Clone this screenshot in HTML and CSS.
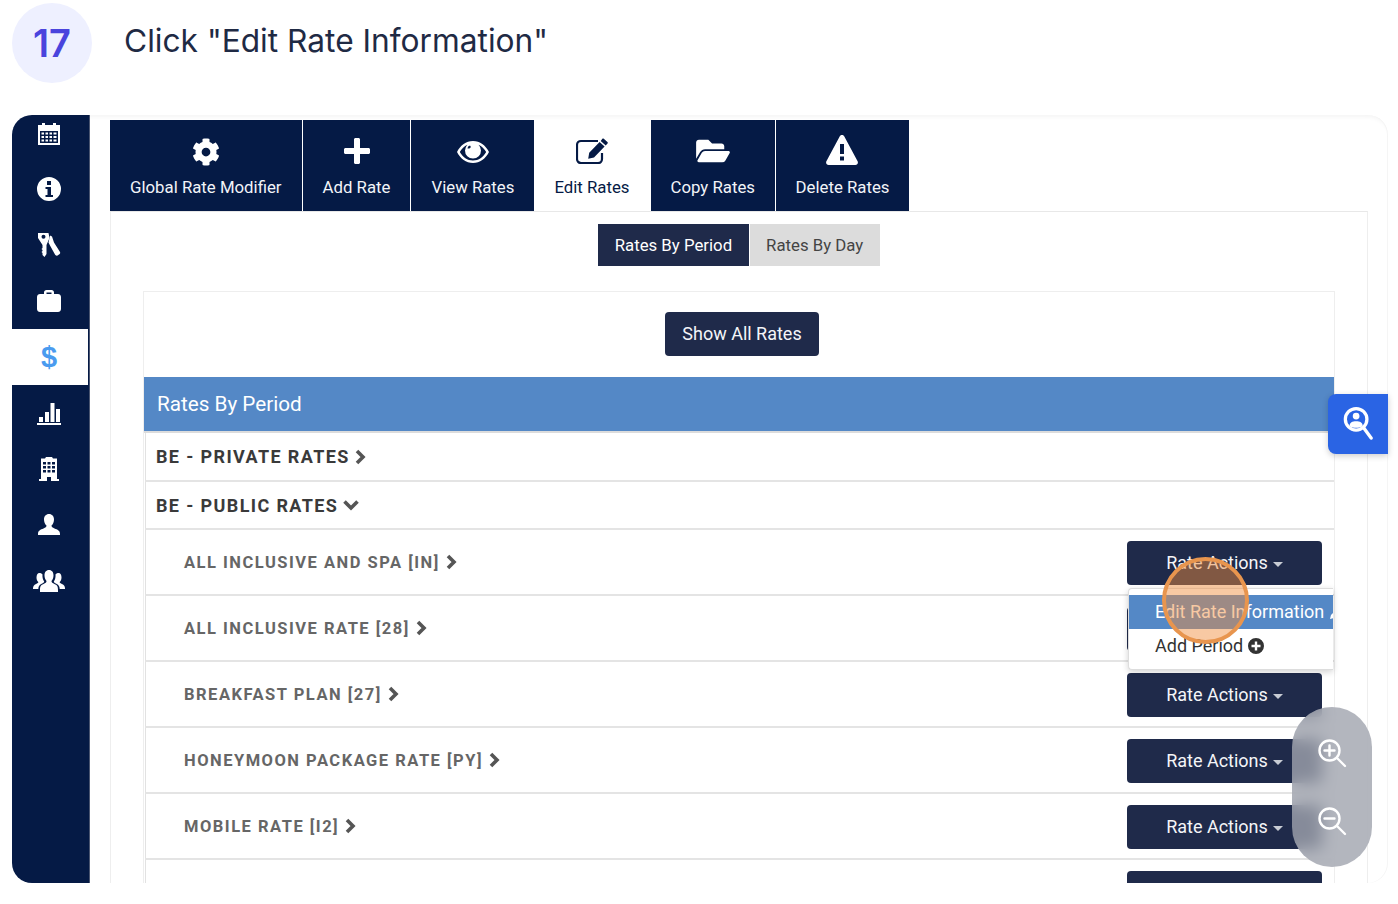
FILE: index.html
```html
<!DOCTYPE html>
<html lang="en">
<head>
<meta charset="utf-8">
<title>Click "Edit Rate Information"</title>
<link rel="stylesheet" href="styles.css">
</head>
<body>
<header class="step">
  <div class="step-num">17</div>
  <h1 class="step-title">Click "Edit Rate Information"</h1>
</header>
<main class="frame">
  <nav class="side">
    <a class="side-item"><svg class="si" viewBox="0 0 24 24"><path fill-rule="evenodd" d="M1 3h4V1h3v2h8V1h3v2h4v20H1zM3 9v12h18V9zM4.500 10.500h2.500v2h-2.500zm4 0h2.500v2H8.500zm4 0h2.500v2h-2.500zm4 0h3v2h-3zm-12 3.500h2.500v2h-2.500zm4 0h2.500v2H8.500zm4 0h2.500v2h-2.500zm4 0h3v2h-3zm-12 3.500h2.500v2h-2.500zm4 0h2.500v2H8.500zm4 0h2.500v2h-2.500zm4 0h3v2h-3z"/></svg></a>
    <a class="side-item"><svg class="si" viewBox="0 0 24 24"><path fill-rule="evenodd" d="M12 0a12 12 0 1 0 0 24 12 12 0 0 0 0-24zM10 4h4v4h-4zM8.500 10H14v8h2v2H8.500v-2h2v-6h-2z"/></svg></a>
    <a class="side-item"><svg class="si" viewBox="0 0 24 24"><path fill-rule="evenodd" d="M1 0h10.500l1 5-3 7v9l-2 3-2-2v-2l-1-1 1-1v-1l-1-1 1-1v-3L1 5zM4.500 3.700a2 2 0 1 0 4 0 2 2 0 0 0-4 0z"/><path d="M13 2.500l2 1 2 6 6 9.500c.5 1 0 2-1 2.500l-1.500 1c-1 .5-2 0-2.500-1l-5-9-1.500-3z"/></svg></a>
    <a class="side-item"><svg class="si" viewBox="0 0 24 24"><path fill-rule="evenodd" d="M3 5h4V3.500C7 2 8 1 9.500 1h5C16 1 17 2 17 3.500V5h4c1.500 0 3 1.300 3 3v12c0 1.700-1.500 3-3 3H3c-1.500 0-3-1.300-3-3V8c0-1.700 1.500-3 3-3zm6.500 0h5V3.500h-5z"/></svg></a>
    <a class="side-item side-active"><span class="dollar">$</span></a>
    <a class="side-item"><svg class="si" viewBox="0 0 24 24"><path d="M0 22h24v2H0zM2 16h4v5H2zM8 11h4v10H8zM13.500 2h4v19h-4zM19 8h4v13h-4z"/></svg></a>
    <a class="side-item"><svg class="si" viewBox="0 0 24 24"><path fill-rule="evenodd" d="M9 0h6l1 1.500h4V22h2v2h-8v-4h-4v4H2v-2h2V1.500h4zM6 5v2.500h3V5zm4.500 0v2.500h3V5zM15 5v2.500h3V5zM6 9v2.500h3V9zm4.500 0v2.500h3V9zM15 9v2.500h3V9zM6 13v2.500h3V13zm4.500 0v2.500h3V13zM15 13v2.500h3V13z"/></svg></a>
    <a class="side-item"><svg class="si" viewBox="0 0 24 24"><path d="M12 1c3 0 5 2.300 5 5.500 0 2.600-1 4.800-2.500 6 0 1.500 1 2 3 3 3 1.200 5.500 2 5.500 5.500v1H1v-1c0-3.500 2.500-4.300 5.500-5.500 2-1 3-1.500 3-3C8 11.300 7 9.100 7 6.500 7 3.300 9 1 12 1z"/></svg></a>
    <a class="side-item"><svg class="si si-wide" viewBox="0 0 32 24"><path d="M16 1c3 0 4.500 2.300 4.500 5.500 0 2.500-1 4.300-2 5.500 0 1.500 1 2 3 3 2.500 1 3.500 2 3.500 6v2H7v-2c0-4 1-5 3.500-6 2-1 3-1.500 3-3-1-1.200-2-3-2-5.500C11.500 3.300 13 1 16 1zM6.500 4c1.200 0 2.300.5 3 1.500-.3 2.500.3 5 1.700 7-.2 1-1 1.500-2.500 2.200C6 16 5.500 17.500 5.300 20H0v-.5c0-2.500 1-3.500 3-4.500 1.500-.7 2.300-1 2.300-2-1-1-1.800-2.500-1.800-4.500C3.500 6 4.500 4 6.500 4zM25.500 4c2 0 3 2 3 4.500 0 2-.8 3.500-1.800 4.500 0 1 .8 1.300 2.300 2 2 1 3 2 3 4.500v.5h-5.300c-.2-2.500-.7-4-3.400-5.300-1.500-.7-2.300-1.200-2.500-2.200 1.400-2 2-4.500 1.700-7 .7-1 1.800-1.500 3-1.500z"/></svg></a>
  </nav>
  <section class="content">
    <div class="tabs">
      <a class="tab"><svg class="ti" viewBox="0 0 512 512"><path d="M487.400 315.700l-42.600-24.600c4.300-23.200 4.300-47 0-70.200l42.600-24.600c4.900-2.800 7.100-8.600 5.500-14-11.100-35.600-30-67.800-54.700-94.600-3.800-4.100-10-5.100-14.800-2.300L380.800 110c-17.900-15.400-38.500-27.300-60.800-35.100V25.800c0-5.600-3.900-10.500-9.400-11.700-36.700-8.200-74.300-7.800-109.200 0-5.500 1.200-9.400 6.100-9.400 11.700V75c-22.200 7.900-42.800 19.800-60.800 35.100L88.700 85.500c-4.900-2.800-11-1.900-14.800 2.300-24.700 26.700-43.600 58.900-54.700 94.600-1.700 5.400.6 11.200 5.500 14L67.300 221c-4.300 23.200-4.300 47 0 70.200l-42.600 24.600c-4.900 2.800-7.100 8.600-5.500 14 11.100 35.600 30 67.800 54.700 94.600 3.800 4.100 10 5.100 14.800 2.300l42.600-24.600c17.900 15.400 38.500 27.300 60.800 35.100v49.200c0 5.600 3.900 10.500 9.400 11.700 36.700 8.200 74.300 7.800 109.200 0 5.500-1.200 9.400-6.100 9.400-11.700v-49.200c22.200-7.900 42.800-19.800 60.800-35.100l42.600 24.600c4.900 2.800 11 1.900 14.800-2.300 24.700-26.700 43.600-58.900 54.700-94.600 1.500-5.500-.7-11.300-5.600-14.100zM256 336c-44.100 0-80-35.900-80-80s35.900-80 80-80 80 35.900 80 80-35.900 80-80 80z"/></svg><span>Global Rate Modifier</span></a>
      <a class="tab"><svg class="ti ti-plus" viewBox="0 0 26 26"><path d="M10 1.500C10 .7 10.700 0 11.500 0h3c.8 0 1.500.7 1.500 1.500V10h8.500c.8 0 1.500.7 1.500 1.500v3c0 .8-.7 1.500-1.500 1.500H16v8.500c0 .8-.7 1.500-1.500 1.500h-3c-.8 0-1.500-.7-1.500-1.500V16H1.500C.7 16 0 15.300 0 14.500v-3C0 10.700.7 10 1.500 10H10z"/></svg><span>Add Rate</span></a>
      <a class="tab"><svg class="ti ti-eye" viewBox="0 0 32 22"><path fill-rule="evenodd" d="M16 0c7 0 12.500 4.300 16 11-3.500 6.700-9 11-16 11S3.500 17.700 0 11C3.500 4.300 9 0 16 0zM2.800 11c3 5 7.500 8.500 13.200 8.500S26.200 16 29.200 11C27.300 7.800 24.800 5.300 21.500 3.800a8 8 0 1 1-11 0C7.200 5.300 4.700 7.800 2.800 11zM13 4.500a3 3 0 0 0-2.500 3h2.200c0-.8.500-1.200 1.300-1.300z"/></svg><span>View Rates</span></a>
      <a class="tab tab-active"><svg class="ti ti-edit" viewBox="0 0 32 26"><path fill="none" stroke="currentColor" stroke-width="2.200" d="M26 15v6c0 2.300-1.700 4-4 4H5c-2.300 0-4-1.700-4-4V7c0-2.300 1.700-4 4-4h17"/><path d="M27.500.6l3.900 3.400c.6.500.6 1.100.1 1.600l-1.800 1.900-5-4.500 1.700-2.200c.3-.4.700-.5 1.100-.2zM23.600 3.900l5 4.500-10.600 11.200-5.800 1.200 1-6z"/></svg><span>Edit Rates</span></a>
      <a class="tab"><svg class="ti ti-folder" viewBox="0 0 576 512"><path d="M572.694 292.093L500.270 416.248A63.997 63.997 0 0 1 444.989 448H45.025c-18.523 0-30.064-20.093-20.731-36.093l72.424-124.155A64 64 0 0 1 152 256h399.964c18.523 0 30.064 20.093 20.730 36.093zM152 224h328v-48c0-26.510-21.490-48-48-48H272l-64-64H48C21.490 64 0 85.490 0 112v278.046l69.077-118.418C86.214 242.250 117.989 224 152 224z"/></svg><span>Copy Rates</span></a>
      <a class="tab"><svg class="ti ti-warn" viewBox="0 0 32 30"><path fill-rule="evenodd" d="M13.800 1.300c1-1.700 3.400-1.700 4.400 0l13.400 25c.9 1.700-.3 3.700-2.200 3.700H2.600C.7 30-.5 28 .4 26.300zM14 9v10h4V9zm0 12.500v4h4v-4z"/></svg><span>Delete Rates</span></a>
    </div>
    <div class="panel">
      <div class="toggle">
        <a class="toggle-btn toggle-on">Rates By Period</a>
        <a class="toggle-btn toggle-off">Rates By Day</a>
      </div>
      <div class="box">
        <div class="box-top"><a class="btn btn-show">Show All Rates</a></div>
        <div class="box-title">Rates By Period</div>
        <div class="group"><span>BE - PRIVATE RATES</span><svg class="chev" viewBox="0 0 12 16"><path d="M3 2l6 6-6 6"/></svg></div>
        <div class="group group-open"><span>BE - PUBLIC RATES</span><svg class="chev-d" viewBox="0 0 18 12"><path d="M2.500 2.500l6.500 6.500 6.500-6.500"/></svg></div>
        <div class="rate">
          <span class="rate-name">ALL INCLUSIVE AND SPA [IN]</span><svg class="chev" viewBox="0 0 12 16"><path d="M3 2l6 6-6 6"/></svg>
          <a class="btn btn-rate">Rate Actions<i class="caret"></i></a>
        </div>
        <div class="rate">
          <span class="rate-name">ALL INCLUSIVE RATE [28]</span><svg class="chev" viewBox="0 0 12 16"><path d="M3 2l6 6-6 6"/></svg>
          <a class="btn btn-rate">Rate Actions<i class="caret"></i></a>
        </div>
        <div class="rate">
          <span class="rate-name">BREAKFAST PLAN [27]</span><svg class="chev" viewBox="0 0 12 16"><path d="M3 2l6 6-6 6"/></svg>
          <a class="btn btn-rate">Rate Actions<i class="caret"></i></a>
        </div>
        <div class="rate">
          <span class="rate-name">HONEYMOON PACKAGE RATE [PY]</span><svg class="chev" viewBox="0 0 12 16"><path d="M3 2l6 6-6 6"/></svg>
          <a class="btn btn-rate">Rate Actions<i class="caret"></i></a>
        </div>
        <div class="rate">
          <span class="rate-name">MOBILE RATE [I2]</span><svg class="chev" viewBox="0 0 12 16"><path d="M3 2l6 6-6 6"/></svg>
          <a class="btn btn-rate">Rate Actions<i class="caret"></i></a>
        </div>
        <div class="rate">
          <span class="rate-name"></span>
          <a class="btn btn-rate"></a>
        </div>
      </div>
    </div>
  </section>
  <div class="menu">
    <div class="menu-item menu-hover">Edit Rate Information <svg class="mi" viewBox="0 0 16 16"><path d="M1 15l1-4 8-8 3 3-8 8z"/></svg></div>
    <div class="menu-item">Add Period <svg class="mi" viewBox="0 0 16 16"><path fill-rule="evenodd" d="M8 0a8 8 0 1 1 0 16A8 8 0 0 1 8 0zM6.800 3.500v3.300H3.500v2.400h3.300v3.300h2.400V9.200h3.300V6.800H9.200V3.500z"/></svg></div>
  </div>
  <div class="spot"></div>
</main>
<a class="find"><svg class="find-i" viewBox="0 0 32 38"><circle cx="14" cy="14" r="11.500" fill="none" stroke="#fff" stroke-width="3.500"/><path d="M22 23l8 11" fill="none" stroke="#fff" stroke-width="3.500" stroke-linecap="round"/><circle cx="14" cy="10.500" r="3.600" fill="#fff"/><path d="M7 21c0-3.500 3-5 7-5s7 1.500 7 5c-2 1.500-4.500 2-7 2s-5-.5-7-2z" fill="#fff"/></svg></a>
<div class="zoomer">
  <svg class="zi" viewBox="0 0 30 30"><circle cx="12.500" cy="12.500" r="10" /><path d="M20 20l8 8M12.500 7.500v10M7.500 12.500h10"/></svg>
  <svg class="zi" viewBox="0 0 30 30"><circle cx="12.500" cy="12.500" r="10" /><path d="M20 20l8 8M7.500 12.500h10"/></svg>
</div>
</body>
</html>
```
FILE: styles.css
```css
* { box-sizing: border-box; }
html, body { height: 100%; }
body {
  margin: 0;
  background: #fff;
  overflow: hidden;
  position: relative;
  font-family: Roboto, "Liberation Sans", sans-serif;
  color: #333;
}
a { display: block; }
.step {
  height: 115px;
  padding: 3px 0 0 12px;
  display: flex;
  align-items: flex-start;
  gap: 32px;
}
.step-num {
  width: 80px;
  height: 80px;
  border-radius: 50%;
  background: #eef0ff;
  color: #4a44dd;
  font: 600 38px/80px Inter, sans-serif;
  text-align: center;
}
.step-title {
  margin: 16px 0 0;
  font: 400 31.700px/44px Inter, sans-serif;
  color: #1f2a44;
}
.frame {
  position: relative;
  margin-left: 12px;
  width: 1376px;
  height: 768px;
  display: flex;
  overflow: hidden;
  border-radius: 20px;
  background: #fff;
  box-shadow: inset 0 5px 4px -3px #f4f4f4, inset -1px 0 0 #f5f5f5;
}
.side {
  flex: none;
  width: 78px;
  height: 768px;
  background: #051a45;
  border-right: 1px solid #4a5570;
  display: flex;
  flex-direction: column;
}
.side-item {
  flex: none;
  height: 56px;
  padding-right: 3px;
  display: flex;
  align-items: center;
  justify-content: center;
  fill: #fff;
}
.side-item:first-child { height: 46px; align-items: flex-start; padding-top: 7px; }
.si { width: 24px; height: 24px; }
.si-wide { width: 32px; height: 24px; }
.side-active { background: #fff; margin-right: 1px; padding-right: 2px; }
.dollar {
  font: 700 29px/1 "Liberation Sans", sans-serif;
  color: #4a9bef;
}
.content {
  flex: none;
  width: 1258px;
  margin: 5px 20px 0;
  height: 763px;
}
.tabs {
  display: flex;
  gap: 1px;
  height: 91px;
}
.tab {
  padding: 0 20px;
  height: 91px;
  background: #051a45;
  color: #f2f4f8;
  fill: #fff;
  font-size: 16.800px;
  line-height: 20px;
  display: flex;
  flex-direction: column;
  align-items: center;
}
.tab:last-child { padding: 0 19.500px; }
.tab span { margin-top: auto; margin-bottom: 14px; white-space: nowrap; }
.ti { width: 28px; height: 28px; margin-top: 18px; flex: none; }
.ti-plus { width: 26px; height: 26px; margin-top: 18px; }
.ti-eye { width: 32px; height: 22px; margin-top: 21px; }
.ti-edit { width: 32px; height: 26px; margin-top: 18px; }
.ti-folder { width: 34px; height: 30px; margin-top: 16px; }
.ti-warn { width: 32px; height: 30px; margin-top: 15px; }
.tab-active {
  background: #fff;
  color: #051a45;
  fill: #051a45;
  margin: 0 0 0 -1px;
  z-index: 1;
}
.panel {
  height: 672px;
  border: 1px solid #eee;
  border-top: 1px solid #e8e8e8;
  border-bottom: 0;
  padding-top: 12px;
}
.toggle { display: flex; justify-content: center; gap: 1px; }
.toggle-btn {
  height: 42px;
  font-size: 16.800px;
  line-height: 43px;
  padding: 0 16.500px;
}
.toggle-on { background: #1f2a4a; color: #fff; }
.toggle-off { background: #dcdcdc; color: #444; }
.box {
  margin: 25px 32px 0;
  border: 1px solid #eee;
  border-bottom: 0;
}
.box-top {
  height: 85px;
  padding: 20px 0 0 6px;
  display: flex;
  justify-content: center;
}
.btn {
  background: #1f2a4a;
  color: #f4f5f8;
  border-radius: 4px;
  height: 44px;
  line-height: 44px;
  text-align: center;
  flex: none;
}
.btn-show { padding: 0 17px; font-size: 18px; }
.box-title {
  height: 56px;
  background: #5488c6;
  border-bottom: 2px solid #dcdcdc;
  color: #fff;
  font-size: 20.700px;
  line-height: 55px;
  padding-left: 13px;
}
.group {
  height: 49px;
  margin-left: 1px;
  padding-left: 10px;
  border-left: 1px solid #e2e2e2;
  border-bottom: 2px solid #e4e4e4;
  font-size: 18px;
  font-weight: 700;
  letter-spacing: 1.380px;
  color: #3a3a3a;
  display: flex;
  align-items: center;
  gap: 4px;
}
.group-open { height: 48px; }
.rate {
  height: 66px;
  margin-left: 1px;
  padding: 0 12px 0 38px;
  border-left: 1px solid #e2e2e2;
  border-bottom: 2px solid #e4e4e4;
  display: flex;
  align-items: center;
  gap: 5px;
}
.rate-name {
  font-size: 16.500px;
  font-weight: 700;
  letter-spacing: 1.500px;
  color: #666;
}
.chev { width: 12px; height: 16px; fill: none; stroke: #555; stroke-width: 3.600; }
.chev-d { width: 18px; height: 12px; fill: none; stroke: #555; stroke-width: 3.600; }
.btn-rate { margin: 2px 0 0 auto; width: 195px; font-size: 18px; }
.caret {
  display: inline-block;
  width: 0;
  height: 0;
  margin-left: 5px;
  vertical-align: 2px;
  border-left: 5px solid transparent;
  border-right: 5px solid transparent;
  border-top: 5px solid #c8ccd4;
}
.menu {
  position: absolute;
  left: 1116px;
  top: 473px;
  width: 205px;
  height: 82px;
  padding-top: 6px;
  background: #fff;
  border: 1px solid #ddd;
  border-right: 0;
  border-radius: 4px 0 0 4px;
  box-shadow: 0 2px 6px rgba(0, 0, 0, .18);
  overflow: hidden;
  white-space: nowrap;
  z-index: 2;
}
.menu-item {
  height: 34px;
  line-height: 33px;
  padding-left: 26px;
  font-size: 18px;
  color: #333;
  fill: #333;
}
.menu-hover { background: #5488c6; color: #fff; fill: #fff; }
.menu-item:last-child { height: 35px; line-height: 34px; }
.mi { width: 16px; height: 16px; vertical-align: -2px; }
.spot {
  position: absolute;
  left: 1150px;
  top: 442px;
  width: 87px;
  height: 87px;
  border-radius: 50%;
  background: rgba(240, 140, 60, .47);
  border: 4px solid #e8954e;
  z-index: 3;
}
.find {
  position: absolute;
  left: 1328px;
  top: 394px;
  width: 60px;
  height: 60px;
  background: #2a64e4;
  border-radius: 8px 0 0 8px;
  box-shadow: 0 2px 6px rgba(0, 0, 0, .2);
  display: flex;
  align-items: center;
  justify-content: center;
  z-index: 5;
}
.find-i { width: 30px; height: 36px; }
.zoomer {
  position: absolute;
  left: 1292px;
  top: 707px;
  width: 80px;
  height: 160px;
  border-radius: 40px;
  background: rgba(160, 164, 174, .8);
  -webkit-backdrop-filter: blur(8px);
  backdrop-filter: blur(8px);
  display: flex;
  flex-direction: column;
  align-items: center;
  padding: 31px 0 0 0;
  gap: 38px;
  z-index: 5;
}
.zi {
  width: 30px;
  height: 30px;
  fill: none;
  stroke: #fff;
  stroke-width: 2.400;
  stroke-linecap: round;
}
```
